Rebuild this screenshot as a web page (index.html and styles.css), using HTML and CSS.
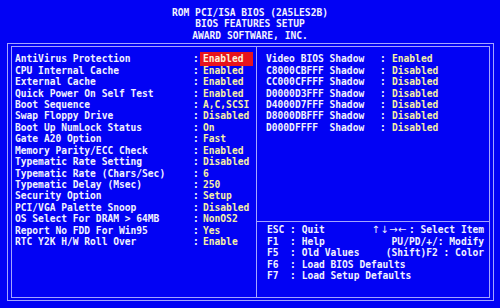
FILE: index.html
```html
<!DOCTYPE html>
<html lang="en">
<head>
    <meta charset="UTF-8">
    <title>BIOS Features Setup</title>
    <link rel="stylesheet" href="styles.css">
</head>
<body>
    <div class="title">
        <div>ROM PCI/ISA BIOS (2A5LES2B)</div>
        <div>BIOS FEATURES SETUP</div>
        <div>AWARD SOFTWARE, INC.</div>
    </div>

    <div class="frame">
        <div class="inner">
            <!-- main settings -->
            <div class="settings">
                <div class="row"><span class="lbl">AntiVirus Protection</span><span class="sep">:</span><span class="val hl">Enabled</span></div>
                <div class="row"><span class="lbl">CPU Internal Cache</span><span class="sep">:</span><span class="val">Enabled</span></div>
                <div class="row"><span class="lbl">External Cache</span><span class="sep">:</span><span class="val">Enabled</span></div>
                <div class="row"><span class="lbl">Quick Power On Self Test</span><span class="sep">:</span><span class="val">Enabled</span></div>
                <div class="row"><span class="lbl">Boot Sequence</span><span class="sep">:</span><span class="val">A,C,SCSI</span></div>
                <div class="row"><span class="lbl">Swap Floppy Drive</span><span class="sep">:</span><span class="val">Disabled</span></div>
                <div class="row"><span class="lbl">Boot Up NumLock Status</span><span class="sep">:</span><span class="val">On</span></div>
                <div class="row"><span class="lbl">Gate A20 Option</span><span class="sep">:</span><span class="val">Fast</span></div>
                <div class="row"><span class="lbl">Memory Parity/ECC Check</span><span class="sep">:</span><span class="val">Enabled</span></div>
                <div class="row"><span class="lbl">Typematic Rate Setting</span><span class="sep">:</span><span class="val">Disabled</span></div>
                <div class="row"><span class="lbl">Typematic Rate (Chars/Sec)</span><span class="sep">:</span><span class="val">6</span></div>
                <div class="row"><span class="lbl">Typematic Delay (Msec)</span><span class="sep">:</span><span class="val">250</span></div>
                <div class="row"><span class="lbl">Security Option</span><span class="sep">:</span><span class="val">Setup</span></div>
                <div class="row"><span class="lbl">PCI/VGA Palette Snoop</span><span class="sep">:</span><span class="val">Disabled</span></div>
                <div class="row"><span class="lbl">OS Select For DRAM &gt; 64MB</span><span class="sep">:</span><span class="val">NonOS2</span></div>
                <div class="row"><span class="lbl">Report No FDD For Win95</span><span class="sep">:</span><span class="val">Yes</span></div>
                <div class="row"><span class="lbl">RTC Y2K H/W Roll Over</span><span class="sep">:</span><span class="val">Enable</span></div>
            </div>

            <div class="side">
                <!-- shadow settings -->
                <div class="shadow">
                    <div class="row"><span class="lbl">Video BIOS Shadow</span><span class="sep">:</span><span class="val">Enabled</span></div>
                    <div class="row"><span class="lbl">C8000CBFFF Shadow</span><span class="sep">:</span><span class="val">Disabled</span></div>
                    <div class="row"><span class="lbl">CC000CFFFF Shadow</span><span class="sep">:</span><span class="val">Disabled</span></div>
                    <div class="row"><span class="lbl">D0000D3FFF Shadow</span><span class="sep">:</span><span class="val">Disabled</span></div>
                    <div class="row"><span class="lbl">D4000D7FFF Shadow</span><span class="sep">:</span><span class="val">Disabled</span></div>
                    <div class="row"><span class="lbl">D8000DBFFF Shadow</span><span class="sep">:</span><span class="val">Disabled</span></div>
                    <div class="row"><span class="lbl">D000DFFFF  Shadow</span><span class="sep">:</span><span class="val">Disabled</span></div>
                </div>

                <!-- key help -->
                <div class="help">
                    <div class="row"><span>ESC : Quit</span><span><span class="arrows">↑↓→←</span>: Select Item</span></div>
                    <div class="row"><span>F1  : Help</span><span>PU/PD/+/: Modify</span></div>
                    <div class="row"><span>F5  : Old Values</span><span>(Shift)F2 : Color</span></div>
                    <div class="row"><span>F6  : Load BIOS Defaults</span></div>
                    <div class="row"><span>F7  : Load Setup Defaults</span></div>
                </div>
            </div>
        </div>
    </div>
</body>
</html>
```

FILE: styles.css
```css
body {
    margin: 0;
    width: 500px;
    height: 308px;
    overflow: hidden;
    background: #0202f4;
    color: #f2f2ff;
    font-family: "DejaVu Sans Mono", "Liberation Mono", monospace;
    font-weight: bold;
    font-size: 9.6px;
}
.title {
    height: 43px;
    box-sizing: border-box;
    padding-top: 7px;
    text-align: center;
    line-height: 11.3px;
}
.frame {
    width: 487px;
    height: 258px;
    margin-left: 7px;
    box-sizing: border-box;
    border: 1px solid #a4a4ff;
    padding: 2px 3px;
}
.inner {
    height: 100%;
    box-sizing: border-box;
    border: 1px solid #a4a4ff;
    display: flex;
}
.settings {
    width: 241px;
    padding: 6px 0 0 3px;
    border-right: 1px solid #a4a4ff;
}
.side {
    flex: 1;
    display: flex;
    flex-direction: column;
}
.row {
    display: flex;
    align-items: center;
    height: 11.44px;
    white-space: pre;
}
.settings .lbl {
    width: 178px;
}
.settings .sep {
    width: 10px;
}
.val {
    color: #f6f0a6;
}
.hl {
    height: 14px;
    line-height: 14px;
    width: 53px;
    box-sizing: border-box;
    margin-left: -3px;
    padding-left: 3px;
    background: #e8141c;
    color: #fff2d8;
}
.shadow {
    height: 175px;
    box-sizing: border-box;
    padding: 6px 0 0 9px;
    border-bottom: 1px solid #a4a4ff;
}
.shadow .lbl {
    width: 114px;
}
.shadow .sep {
    width: 12px;
}
.help {
    padding: 2px 5px 0 10px;
}
.help .row {
    justify-content: space-between;
    height: 11.5px;
}
.arrows {
    font-family: "DejaVu Sans", sans-serif;
    font-weight: normal;
    font-size: 10px;
    letter-spacing: 0.5px;
    margin-right: 2px;
}
```
